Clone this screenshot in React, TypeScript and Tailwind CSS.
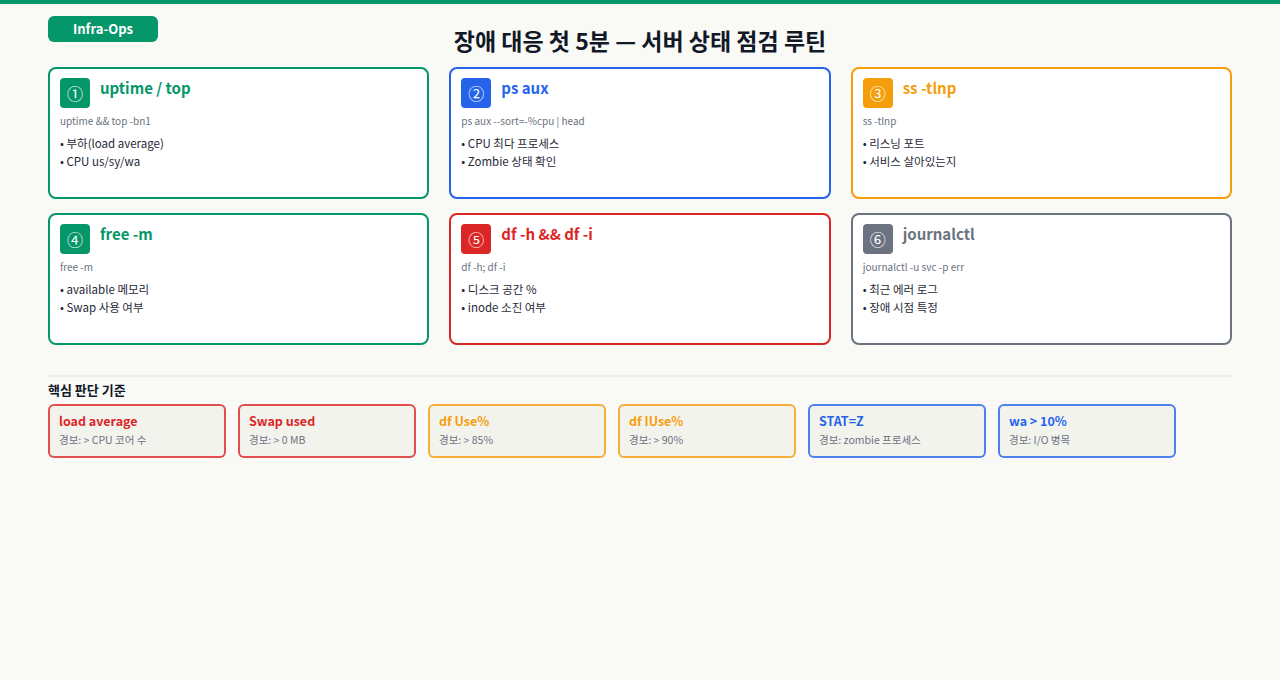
const F = { fontFamily: '"Noto Sans CJK KR","Noto Sans",sans-serif' };
const cards = [
  { n: '①', t: 'uptime / top', c: 'uptime && top -bn1', b: ['부하(load average)', 'CPU us/sy/wa'], col: '#059669' },
  { n: '②', t: 'ps aux', c: 'ps aux --sort=-%cpu | head', b: ['CPU 최다 프로세스', 'Zombie 상태 확인'], col: '#2563eb' },
  { n: '③', t: 'ss -tlnp', c: 'ss -tlnp', b: ['리스닝 포트', '서비스 살아있는지'], col: '#f59e0b' },
  { n: '④', t: 'free -m', c: 'free -m', b: ['available 메모리', 'Swap 사용 여부'], col: '#059669' },
  { n: '⑤', t: 'df -h && df -i', c: 'df -h; df -i', b: ['디스크 공간 %', 'inode 소진 여부'], col: '#dc2626' },
  { n: '⑥', t: 'journalctl', c: 'journalctl -u svc -p err', b: ['최근 에러 로그', '장애 시점 특정'], col: '#6b7280' },
];
const crit = [
  { t: 'load average', d: '경보: > CPU 코어 수', col: '#dc2626' },
  { t: 'Swap used', d: '경보: > 0 MB', col: '#dc2626' },
  { t: 'df Use%', d: '경보: > 85%', col: '#f59e0b' },
  { t: 'df IUse%', d: '경보: > 90%', col: '#f59e0b' },
  { t: 'STAT=Z', d: '경보: zombie 프로세스', col: '#2563eb' },
  { t: 'wa > 10%', d: '경보: I/O 병목', col: '#2563eb' },
];
export default function App() {
  return (
    <div style={F} className="w-[1280px] h-[680px] bg-[#f9f9f6] border-t-4 border-[#059669] px-12 text-[#1f2937] overflow-hidden">
      <div className="relative h-[63px]">
        <div className="absolute left-0 top-3 w-[110px] h-[26px] rounded-md bg-[#059669] text-white text-[13px] font-bold flex items-center justify-center">Infra-Ops</div>
        <div className="pt-[18px] text-center text-[23px] font-bold leading-[36px] text-[#111827]">장애 대응 첫 5분 — 서버 상태 점검 루틴</div>
      </div>
      <div className="grid grid-cols-3 gap-x-5 gap-y-[14px]">
        {cards.map(k => (
          <div key={k.n} className="h-[132px] rounded-lg border-2 bg-white px-[10px] pt-[9px]" style={{ borderColor: k.col }}>
            <div className="flex items-start gap-[10px]">
              <div className="w-[30px] h-[30px] rounded-[4px] text-white flex items-center justify-center text-[16px]" style={{ background: k.col }}>{k.n}</div>
              <div className="text-[15px] font-bold leading-[20px]" style={{ color: k.col }}>{k.t}</div>
            </div>
            <div className="mt-[5px] text-[10px] text-[#6b7280] leading-[16px]">{k.c}</div>
            <div className="mt-[5px] text-[11.5px] leading-[18px] text-[#1f2937]">
              {k.b.map(x => <div key={x}>• {x}</div>)}
            </div>
          </div>
        ))}
      </div>
      <div className="mt-[30px] border-t-2 border-[#ececea] pt-[3px]">
        <div className="text-[13px] font-bold leading-[20px] text-[#111827]">핵심 판단 기준</div>
        <div className="mt-[4px] flex gap-3">
          {crit.map(c => (
            <div key={c.t} className="w-[178px] h-[54px] rounded-md border-2 bg-[#f3f3ee] px-[9px] pt-[5px]" style={{ borderColor: c.col + 'cc' }}>
              <div className="text-[12.5px] font-bold leading-[20px]" style={{ color: c.col }}>{c.t}</div>
              <div className="text-[10.5px] leading-[18px] text-[#6b7280]">{c.d}</div>
            </div>
          ))}
        </div>
      </div>
    </div>
  );
}
